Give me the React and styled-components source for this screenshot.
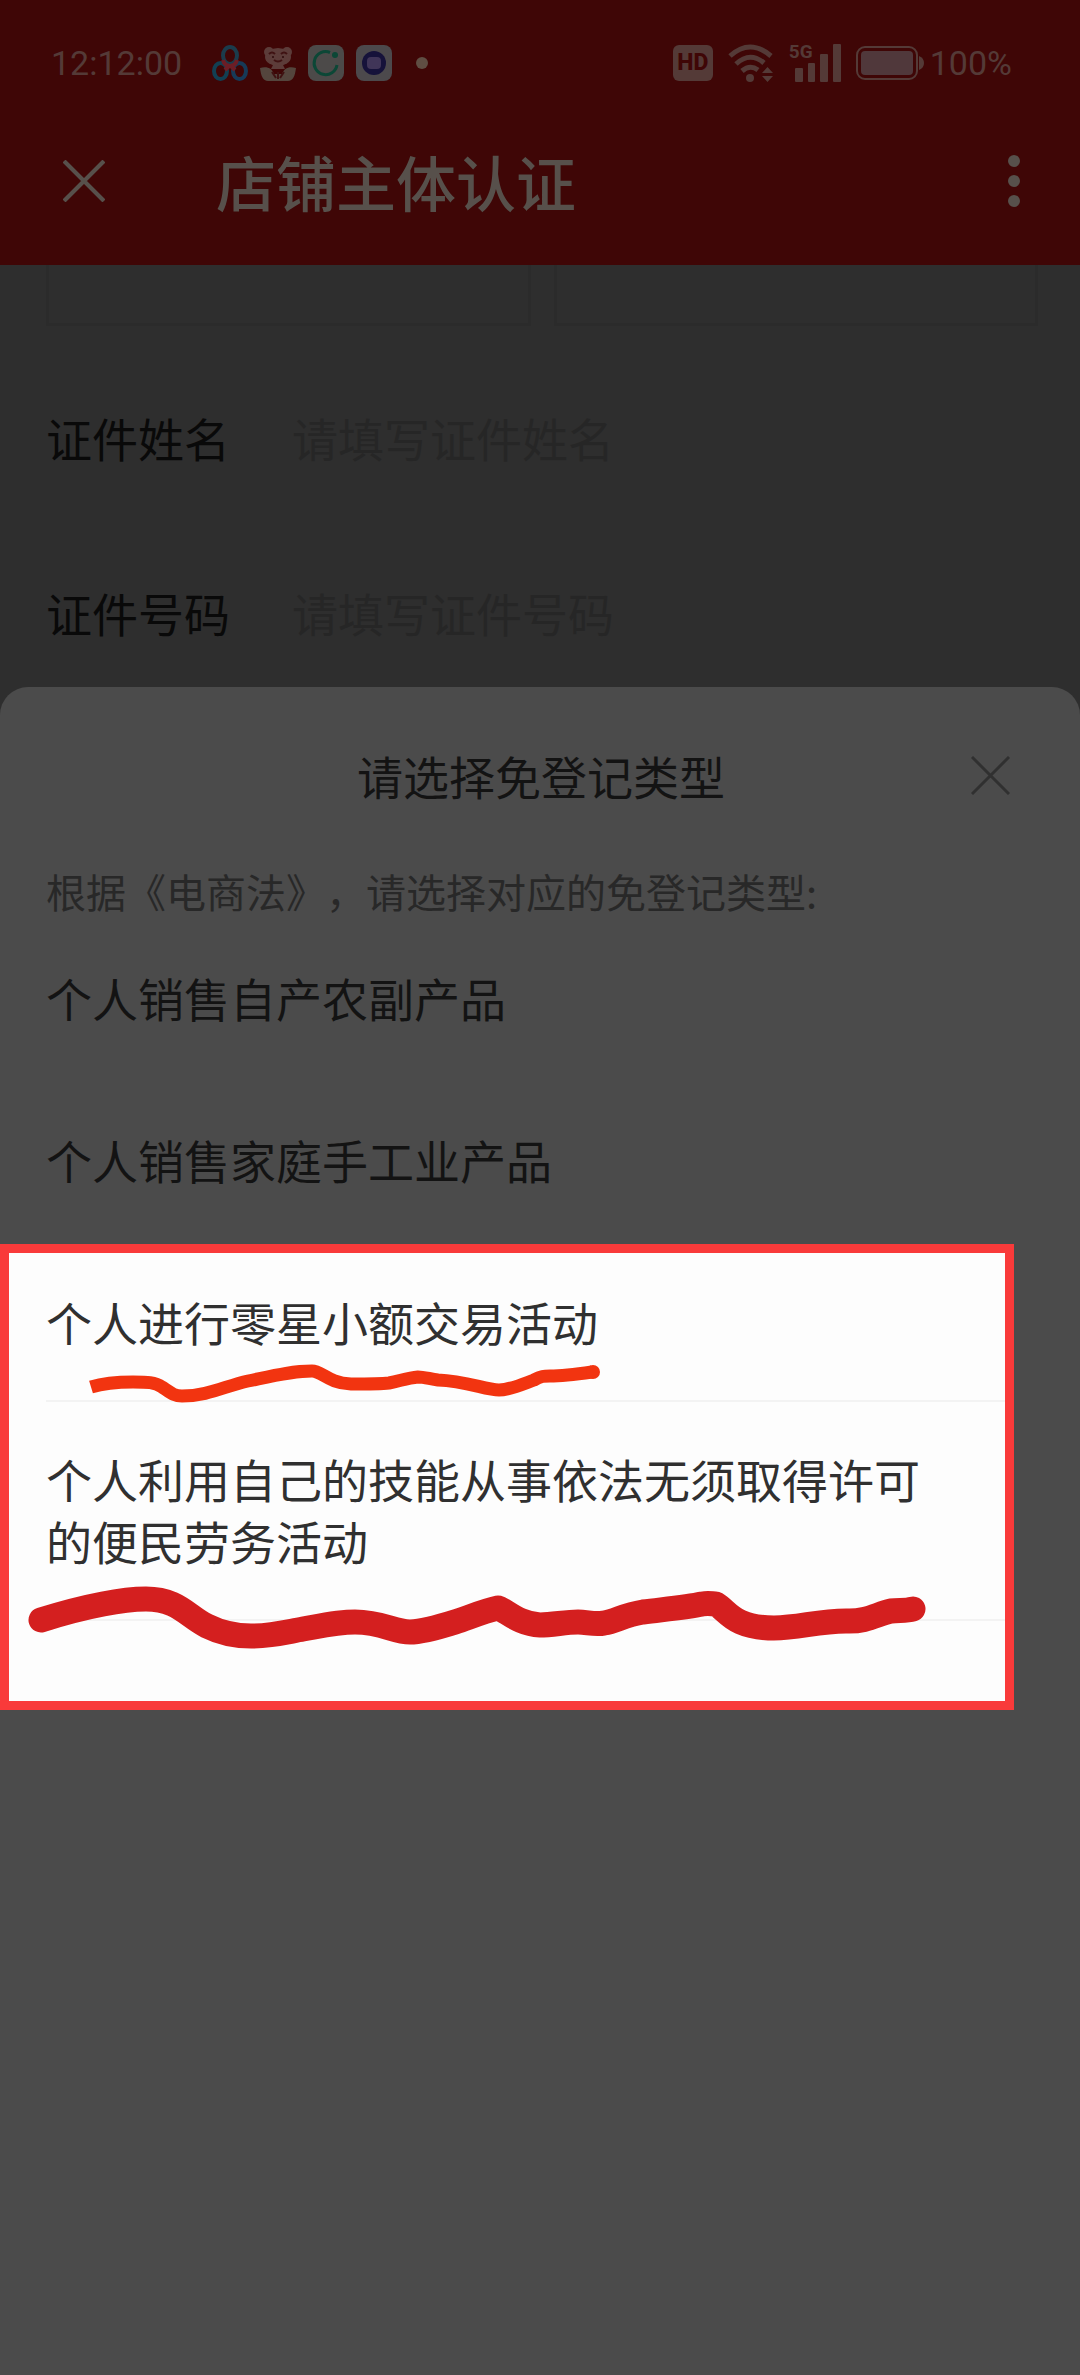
import React from "react";
import styled, { createGlobalStyle } from "styled-components";

const App = () => {
  return (
    <Screen>
      <GlobalStyle />
      <Header>
        <StatusBar />
        <NavBar>
          <IconButton aria-label="关闭页面">
            <CloseIcon size={42} weight={4} />
          </IconButton>
          <h1>店铺主体认证</h1>
          <IconButton aria-label="更多">
            <svg width="12" height="52" viewBox="0 0 12 52" fill="currentColor">
              <circle cx="6" cy="6" r="6" />
              <circle cx="6" cy="26" r="6" />
              <circle cx="6" cy="46" r="6" />
            </svg>
          </IconButton>
        </NavBar>
      </Header>
      <main>
        <Uploads>
          <UploadBox />
          <UploadBox />
        </Uploads>
        <Fields>
          <Field id="name" label="证件姓名" />
          <Field id="number" label="证件号码" />
        </Fields>
      </main>
      <TypeSheet />
    </Screen>
  );
};

const Field = ({ id, label }) => (
  <StyledField>
    <label htmlFor={id}>{label}</label>
    <input id={id} type="text" placeholder={`请填写${label}`} />
  </StyledField>
);

const TypeSheet = () => (
  <Sheet role="dialog" aria-labelledby="sheet-title">
    <SheetHead>
      <h2 id="sheet-title">请选择免登记类型</h2>
      <SheetClose aria-label="关闭">
        <CloseIcon size={39} weight={3} />
      </SheetClose>
    </SheetHead>
    <Hint>根据《电商法》，请选择对应的免登记类型:</Hint>
    <Option>个人销售自产农副产品</Option>
    <Option>个人销售家庭手工业产品</Option>
    <Highlight>
      <MarkedOption $top={37}>个人进行零星小额交易活动</MarkedOption>
      <MarkedOption $top={45}>
        个人利用自己的技能从事依法无须取得许可的便民劳务活动
      </MarkedOption>
      <Scribbles />
    </Highlight>
  </Sheet>
);

// Hand drawn underlines
const Scribbles = () => (
  <ScribbleLayer width="996" height="448" viewBox="9 1254 996 448" fill="none">
    <path
      d="M91 1388C104 1384 118 1383 133 1383C147 1383 155 1383 162 1388C171 1394 174 1397 182 1397C208 1397 225 1387 248 1382C272 1377 292 1372 312 1372C322 1372 328 1384 351 1385C366 1385 380 1385 389 1384C400 1382 407 1379 418 1378C424 1378 430 1380 438 1381C466 1382 486 1391 499 1391C510 1391 523 1385 534 1381C541 1377 544 1377 550 1377C564 1377 578 1375 592 1373"
      stroke="#f23410"
      strokeWidth="13"
    />
    <circle cx="593" cy="1373" r="7" fill="#f23410" />
    <path
      d="M41 1621C60 1615 82 1609 103 1605C118 1602 131 1600 146 1600C178 1600 187 1617 207 1627C219 1633 235 1637 251 1637C272 1637 286 1633 303 1630C320 1627 337 1623 355 1623C382 1623 394 1633 410 1633C421 1633 436 1629 455 1623C470 1618 484 1612 498 1609C506 1611 518 1625 540 1626C553 1626 565 1623 578 1623C587 1623 595 1626 604 1624C616 1622 624 1616 643 1613C667 1610 688 1608 702 1605C709 1604 712 1605 716 1605C728 1612 733 1629 774 1629C799 1629 817 1622 846 1622C867 1623 877 1615 891 1612C899 1611 906 1612 913 1610"
      stroke="#d41f1f"
      strokeWidth="25"
      strokeLinecap="round"
      strokeLinejoin="round"
    />
  </ScribbleLayer>
);

const CloseIcon = ({ size, weight }) => (
  <svg
    width={size}
    height={size}
    viewBox="0 0 40 40"
    stroke="currentColor"
    strokeWidth={weight}
  >
    <path d="M1 1L39 39M39 1L1 39" />
  </svg>
);

const StatusBar = () => (
  <StyledStatus>
    <time>12:12:00</time>
    <AppIcons>
      <svg width="36" height="36" viewBox="0 0 36 36" fill="none" strokeWidth="4">
        <ellipse cx="8.5" cy="26" rx="6.5" ry="8" stroke="#123f52" />
        <ellipse cx="27.5" cy="26" rx="6.5" ry="8" stroke="#173a58" />
        <ellipse cx="18" cy="10.500" rx="7" ry="8.500" stroke="#1b3c4c" />
        <path d="M11 15C12 19 15 21 18 21S24 19 25 15M18 20L13 25M18 20L23 25" stroke="#6d1d25" />
      </svg>
      <svg width="36" height="36" viewBox="0 0 36 36" fill="#5c3c39">
        <circle cx="9" cy="7" r="5" />
        <circle cx="27" cy="7" r="5" />
        <ellipse cx="18" cy="12" rx="13" ry="9" />
        <path d="M14 18H22L25 24H11Z" />
        <path d="M0 23C8 21 12 24 14 29H22C24 24 28 21 36 23C35 31 33 36 28 36H8C3 36 1 31 0 23Z" fill="#54453d" />
        <path d="M9 9Q12 6 15 9M21 9Q24 6 27 9M14 15Q18 18 22 15M12 27L16 33M24 27L20 33M18 27V34" stroke="#3f1212" strokeWidth="2" fill="none" />
        <circle cx="13" cy="12" r="1" fill="#2c0a0a" />
        <circle cx="23" cy="12" r="1" fill="#2c0a0a" />
      </svg>
      <svg width="36" height="36" viewBox="0 0 36 36" fill="none">
        <rect width="36" height="36" rx="8" fill="#4c4a49" />
        <path d="M22 7.500A11.500 11.500 0 1 0 29 20" stroke="#0c4736" strokeWidth="3" />
        <circle cx="27" cy="10" r="3" fill="#0c4736" />
      </svg>
      <svg width="36" height="36" viewBox="0 0 36 36">
        <rect width="36" height="36" rx="8" fill="#4c494c" />
        <circle cx="18" cy="18" r="12" fill="#16123a" />
        <rect x="11" y="12" width="14" height="12" rx="4" fill="#403558" />
      </svg>
      <Dot />
    </AppIcons>
    <SystemIcons>
      <HdBadge>HD</HdBadge>
      <svg width="46" height="38" viewBox="0 0 46 38" fill="none" stroke="currentColor" strokeWidth="5">
        <path d="M2 12Q22 -6 43 12" />
        <path d="M8 20Q22 7 36 19" />
        <path d="M14 27Q22 20 30 26" />
        <circle cx="22" cy="34" r="4" fill="currentColor" stroke="none" />
        <path d="M34 29L39.500 23L45 29ZM34 32L39.500 38L45 32Z" fill="currentColor" stroke="none" />
      </svg>
      <Signal>
        <span>5G</span>
        <svg width="46" height="38" viewBox="0 0 46 38" fill="currentColor">
          <rect y="24" width="8" height="14" rx="1" />
          <rect x="13" y="19" width="7" height="19" rx="1" />
          <rect x="25" y="10" width="8" height="28" rx="1" />
          <rect x="38" y="0" width="8" height="38" rx="1" />
        </svg>
      </Signal>
      <svg width="68" height="34" viewBox="0 0 68 34">
        <rect x="1" y="1" width="60" height="32" rx="8" fill="none" stroke="currentColor" strokeWidth="2" />
        <rect x="5" y="5" width="52" height="24" rx="4" fill="#50383b" />
        <path d="M63 10Q68 12 68 17T63 24Z" fill="currentColor" />
      </svg>
      <span>100%</span>
    </SystemIcons>
  </StyledStatus>
);

const GlobalStyle = createGlobalStyle`
  * {
    margin: 0;
    padding: 0;
    box-sizing: border-box;
  }
  body {
    background: #2e2e2e;
    font-family: "Noto Sans CJK SC", sans-serif;
  }
  button {
    border: none;
    background: none;
    color: inherit;
    font: inherit;
    cursor: pointer;
  }
  svg {
    display: block;
    flex-shrink: 0;
  }
`;

const Screen = styled.div`
  display: flex;
  flex-direction: column;
  min-height: 100vh;
  background: #2e2e2e;
`;

const Header = styled.header`
  background: #3f0606;
  color: #57504b;
`;

const StyledStatus = styled.div`
  display: flex;
  align-items: center;
  height: 84px;
  padding: 42px 68px 0 51px;
  color: #543a37;
  font-family: Roboto, sans-serif;
  font-size: 34px;
  font-weight: 400;
  line-height: 42px;
  time {
    width: 161px;
  }
`;

const AppIcons = styled.div`
  display: flex;
  align-items: center;
  gap: 12px;
`;

const Dot = styled.i`
  width: 12px;
  height: 12px;
  margin-left: 12px;
  border-radius: 50%;
  background: #5f4e43;
`;

const SystemIcons = styled.div`
  display: flex;
  align-items: center;
  gap: 15px;
  margin-left: auto;
  > span {
    margin-left: -9px;
  }
`;

const HdBadge = styled.b`
  width: 40px;
  height: 36px;
  border-radius: 6px;
  background: #543a37;
  color: #3f0606;
  font-size: 23px;
  font-weight: 800;
  line-height: 36px;
  text-align: center;
`;

const Signal = styled.div`
  position: relative;
  padding-left: 6px;
  span {
    position: absolute;
    left: 0;
    top: -2px;
    font-size: 19px;
    font-weight: 700;
    line-height: 20px;
  }
`;

const NavBar = styled.nav`
  display: flex;
  align-items: center;
  height: 181px;
  padding: 12px 60px 0 63px;
  h1 {
    flex: 1;
    margin-left: 111px;
    font-size: 60px;
    font-weight: 500;
    line-height: 80px;
  }
`;

const IconButton = styled.button`
  display: flex;
`;

const Uploads = styled.div`
  display: flex;
  gap: 23px;
  padding: 0 42px 0 46px;
`;

const UploadBox = styled.div`
  flex: 1;
  height: 61px;
  border: 3px solid #2b2b2b;
  border-top: none;
`;

const Fields = styled.form`
  display: flex;
  flex-direction: column;
  gap: 115px;
  padding: 81px 46px 45px;
`;

const StyledField = styled.div`
  display: flex;
  align-items: center;
  height: 60px;
  font-size: 46px;
  line-height: 60px;
  label {
    width: 246px;
    color: #090909;
  }
  input {
    flex: 1;
    min-width: 0;
    border: none;
    outline: none;
    background: none;
    color: #090909;
    font: inherit;
  }
  input::placeholder {
    color: #262626;
    opacity: 1;
  }
`;

const Sheet = styled.section`
  flex: 1;
  padding-top: 58px;
  border-radius: 28px 28px 0 0;
  background: #4b4b4b;
  color: #131313;
`;

const SheetHead = styled.div`
  display: grid;
  grid-template-columns: 1fr auto 1fr;
  align-items: center;
  padding: 0 70px 0 72px;
  h2 {
    grid-column: 2;
    font-size: 46px;
    font-weight: 400;
    line-height: 60px;
  }
`;

const SheetClose = styled(IconButton)`
  justify-self: end;
  color: #303030;
`;

const Hint = styled.p`
  margin-top: 58px;
  padding: 0 46px;
  color: #282828;
  font-size: 40px;
  line-height: 56px;
  text-spacing-trim: space-all;
`;

const Option = styled.button`
  display: block;
  width: 100%;
  padding: 47px 46px 53px;
  font-size: 46px;
  line-height: 62px;
  text-align: left;
`;

const Highlight = styled.div`
  position: relative;
  margin: 1px 66px 0 0;
  padding: 0 0 80px 37px;
  border: 9px solid #f93a3a;
  background: #fdfdfd;
  color: #303030;
`;

const MarkedOption = styled(Option)`
  padding: ${({ $top }) => $top}px 60px 48px 0;
  border-bottom: 2px solid #f3f3f3;
`;

const ScribbleLayer = styled.svg`
  position: absolute;
  left: 0;
  top: 0;
  pointer-events: none;
`;

export default App;
